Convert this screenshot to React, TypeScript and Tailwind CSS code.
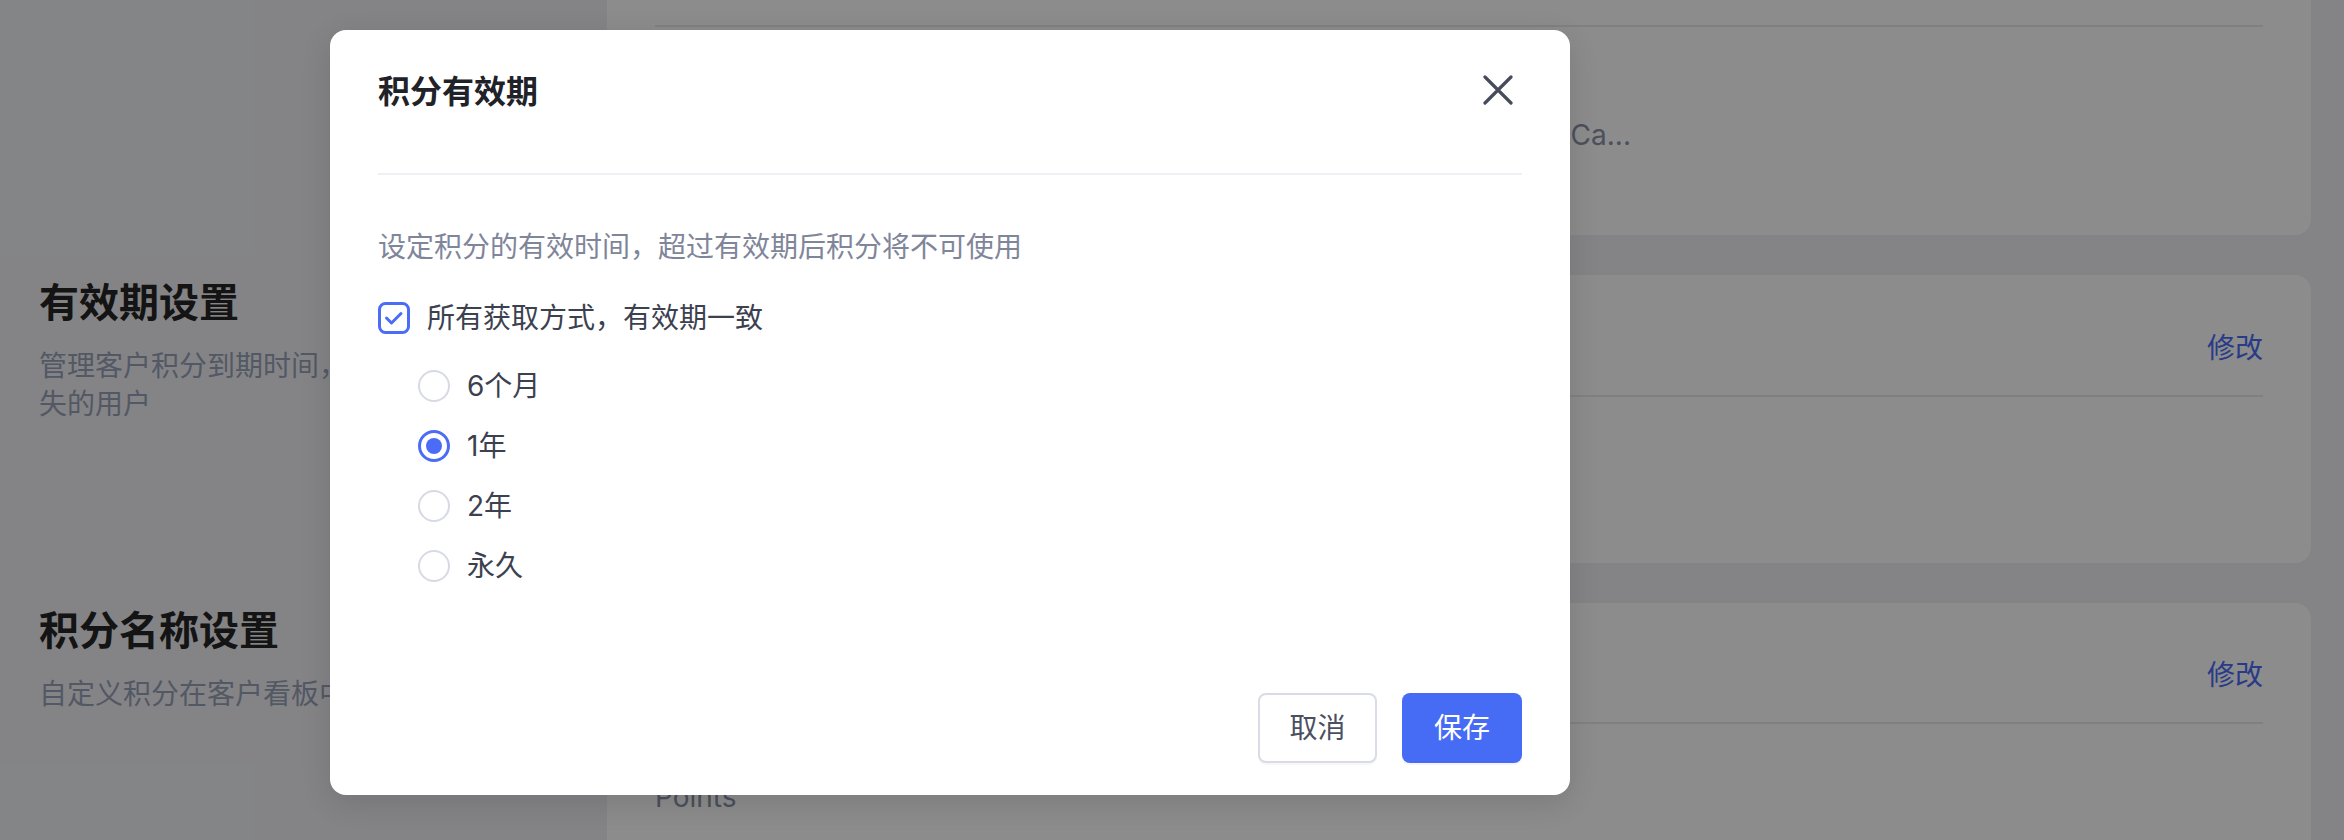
import { useState } from "react";

const options = ["6个月", "1年", "2年", "永久"];

function CheckIcon() {
  return (
    <svg width="32" height="32" viewBox="0 0 32 32" fill="none">
      <rect x="1.5" y="1.5" width="29" height="29" rx="6" stroke="#4a6cf7" strokeWidth="3" />
      <path d="M8.5 16 L13.5 21 L23 11.5" stroke="#4a6cf7" strokeWidth="3" strokeLinecap="round" strokeLinejoin="round" />
    </svg>
  );
}

function Radio({ checked }: { checked: boolean }) {
  if (checked) {
    return (
      <span className="flex h-[32px] w-[32px] items-center justify-center rounded-full border-[3px] border-[#4a6cf7]">
        <span className="h-[16px] w-[16px] rounded-full bg-[#4a6cf7]" />
      </span>
    );
  }
  return <span className="block h-[32px] w-[32px] rounded-full border-[2.5px] border-[#d7dae4]" />;
}

function SettingCard({ label, value, top }: { label: string; value: string; top: string }) {
  return (
    <div className={`flex-1 rounded-[16px] bg-white px-[48px] ${top}`}>
      <div className="flex h-[50px] items-center justify-between text-[28px] leading-[40px]">
        <span className="text-[#1f2937]">{label}</span>
        <span className="text-[#4a6cf7]">修改</span>
      </div>
      <div className="mt-[22px] h-[2px] bg-[#e9eaef]" />
      <div className="mt-[53px] text-[28px] leading-[40px] text-[#8a93a8]">{value}</div>
    </div>
  );
}

export default function App() {
  const [selected, setSelected] = useState("1年");

  return (
    <div className="relative h-[840px] w-[2344px] overflow-hidden bg-[#f0f1f5] font-['Inter','Noto_Sans_CJK_SC',sans-serif]">
      {/* page behind the dialog */}
      <div className="flex flex-col">
        <div className="flex h-[235px] pr-[33px]">
          <div className="w-[607px] shrink-0" />
          <div className="flex-1 rounded-b-[16px] bg-white px-[48px]">
            <div className="mt-[25px] h-[2px] bg-[#e9eaef]" />
            <div className="mt-[88px] w-[976px] overflow-hidden whitespace-nowrap text-right text-[28px] leading-[40px] text-[#8a93a8]">
              积分可用于兑换优惠券、实物礼品、Gift Ca...
            </div>
          </div>
        </div>

        <div className="mt-[40px] flex h-[288px] pr-[33px]">
          <div className="w-[607px] shrink-0 pl-[39px]">
            <h2 className="text-[40px] font-bold leading-[56px] text-[#262626]">有效期设置</h2>
            <p className="mt-[16px] w-[424px] text-[28px] leading-[38px] text-[#98a1b8]">
              管理客户积分到期时间，挽回将流失的用户
            </p>
          </div>
          <SettingCard label="积分有效期" value="1年" top="pt-[48px]" />
        </div>

        <div className="mt-[40px] flex h-[300px] pr-[33px]">
          <div className="w-[607px] shrink-0 pl-[39px]">
            <h2 className="text-[40px] font-bold leading-[56px] text-[#262626]">积分名称设置</h2>
            <p className="mt-[16px] w-[512px] text-[28px] leading-[38px] text-[#98a1b8]">
              自定义积分在客户看板中的展示名称
            </p>
          </div>
          <SettingCard label="积分名称" value="Points" top="pt-[47px]" />
        </div>
      </div>

      <div className="absolute inset-0 bg-black/45" />

      {/* dialog */}
      <div className="absolute left-[330px] top-[30px] flex h-[765px] w-[1240px] flex-col rounded-[16px] bg-white px-[48px] pb-[32px] shadow-[0_8px_30px_rgba(0,0,0,0.12)]">
        <div className="mt-[40px] flex h-[44px] items-center justify-between">
          <h1 className="text-[32px] font-semibold leading-[44px] text-[#1f2329]">积分有效期</h1>
          <svg className="mb-[4px] mr-[9px]" width="30" height="30" viewBox="0 0 30 30" fill="none">
            <path d="M2 2 L28 28 M28 2 L2 28" stroke="#474c5a" strokeWidth="3.2" strokeLinecap="round" />
          </svg>
        </div>
        <div className="mt-[59px] h-[2px] bg-[#eff0f3]" />

        <p className="mt-[52px] text-[28px] leading-[40px] text-[#80869a]">
          设定积分的有效时间，超过有效期后积分将不可使用
        </p>

        <label className="mt-[31px] flex h-[40px] items-center gap-[17px]">
          <CheckIcon />
          <span className="text-[28px] leading-[40px] text-[#3c4150]">所有获取方式，有效期一致</span>
        </label>

        <div className="mt-[28px] flex flex-col gap-[20px] pl-[40px]">
          {options.map((o) => (
            <div key={o} className="flex h-[40px] cursor-pointer items-center gap-[17px]" onClick={() => setSelected(o)}>
              <Radio checked={selected === o} />
              <span className="text-[28px] leading-[40px] text-[#3c4150]">{o}</span>
            </div>
          ))}
        </div>

        <div className="mt-auto flex justify-end gap-[25px]">
          <button className="h-[70px] w-[119px] rounded-[8px] border-2 border-[#d9dce6] bg-white text-[28px] text-[#4b5060] shadow-[0_2px_0_rgba(0,0,0,0.03)]">
            取消
          </button>
          <button className="h-[70px] w-[120px] rounded-[8px] bg-[#466cf5] text-[28px] text-white shadow-[0_2px_0_rgba(0,0,0,0.04)]">
            保存
          </button>
        </div>
      </div>
    </div>
  );
}
